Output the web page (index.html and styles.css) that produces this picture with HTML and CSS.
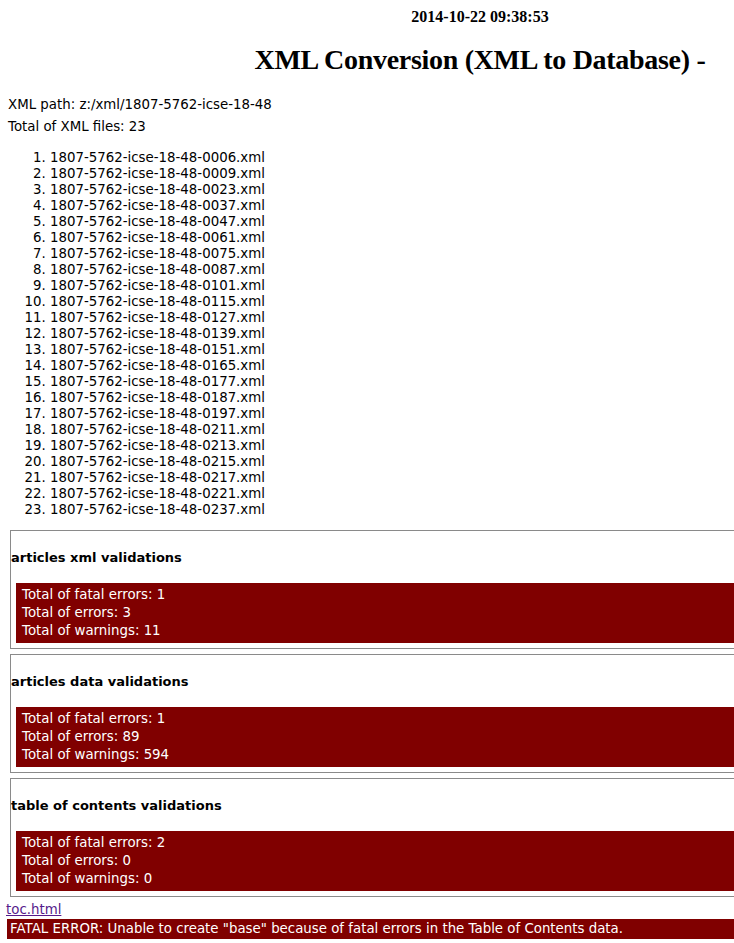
FILE: index.html
```html
<!DOCTYPE html>
<html lang="en">
<head>
<meta charset="utf-8">
<title>XML Conversion (XML to Database)</title>
<link rel="stylesheet" href="styles.css">
</head>
<body>
<div class="page">
  <div class="stamp">2014-10-22 09:38:53</div>
  <h1 class="title">XML Conversion (XML to Database) -</h1>
  <p class="info">XML path: z:/xml/1807-5762-icse-18-48</p>
  <p class="info">Total of XML files: 23</p>
  <ol class="files">
    <li>1807-5762-icse-18-48-0006.xml</li>
    <li>1807-5762-icse-18-48-0009.xml</li>
    <li>1807-5762-icse-18-48-0023.xml</li>
    <li>1807-5762-icse-18-48-0037.xml</li>
    <li>1807-5762-icse-18-48-0047.xml</li>
    <li>1807-5762-icse-18-48-0061.xml</li>
    <li>1807-5762-icse-18-48-0075.xml</li>
    <li>1807-5762-icse-18-48-0087.xml</li>
    <li>1807-5762-icse-18-48-0101.xml</li>
    <li>1807-5762-icse-18-48-0115.xml</li>
    <li>1807-5762-icse-18-48-0127.xml</li>
    <li>1807-5762-icse-18-48-0139.xml</li>
    <li>1807-5762-icse-18-48-0151.xml</li>
    <li>1807-5762-icse-18-48-0165.xml</li>
    <li>1807-5762-icse-18-48-0177.xml</li>
    <li>1807-5762-icse-18-48-0187.xml</li>
    <li>1807-5762-icse-18-48-0197.xml</li>
    <li>1807-5762-icse-18-48-0211.xml</li>
    <li>1807-5762-icse-18-48-0213.xml</li>
    <li>1807-5762-icse-18-48-0215.xml</li>
    <li>1807-5762-icse-18-48-0217.xml</li>
    <li>1807-5762-icse-18-48-0221.xml</li>
    <li>1807-5762-icse-18-48-0237.xml</li>
  </ol>

  <div class="section">
    <h3 class="section-title">articles xml validations</h3>
    <div class="summary">
      <div>Total of fatal errors: 1</div>
      <div>Total of errors: 3</div>
      <div>Total of warnings: 11</div>
    </div>
  </div>

  <div class="section">
    <h3 class="section-title">articles data validations</h3>
    <div class="summary">
      <div>Total of fatal errors: 1</div>
      <div>Total of errors: 89</div>
      <div>Total of warnings: 594</div>
    </div>
  </div>

  <div class="section">
    <h3 class="section-title">table of contents validations</h3>
    <div class="summary">
      <div>Total of fatal errors: 2</div>
      <div>Total of errors: 0</div>
      <div>Total of warnings: 0</div>
    </div>
  </div>

  <div class="toc"><a class="toc-link" href="#">toc.html</a></div>
  <div class="fatal">FATAL ERROR: Unable to create "base" because of fatal errors in the Table of Contents data.</div>
</div>
</body>
</html>
```

FILE: styles.css
```css
html {
  overflow-x: hidden;
}

body {
  margin: 0;
  background: #ffffff;
  color: #000000;
  font-family: "DejaVu Sans", Verdana, sans-serif;
  font-size: 13.35px;
}

.page {
  width: 944px;
  padding: 0 8px;
}

.stamp {
  padding-top: 8px;
  font-family: "Liberation Serif", "Times New Roman", serif;
  font-weight: bold;
  font-size: 16px;
  line-height: 18px;
  text-align: center;
}

.title {
  margin: 18px 0 21px;
  font-family: "Liberation Serif", "Times New Roman", serif;
  font-weight: bold;
  font-size: 28px;
  line-height: 32px;
  letter-spacing: -0.3px;
  text-align: center;
}

.info {
  margin: 0 0 6px;
  line-height: 16px;
}

.files {
  margin: 15px 0 12px;
  padding-left: 42px;
  line-height: 16px;
}

.section {
  margin: 0 0 5px 2px;
  border: 1px solid #8a8a8a;
}

.section-title {
  margin: 19px 0 17px;
  font-size: 13px;
  font-weight: bold;
  line-height: 16px;
}

.summary {
  margin: 0 0 5px 5px;
  padding: 3px 6px;
  background: #800000;
  color: #ffffff;
  line-height: 18px;
}

.toc {
  margin: 5px 0 1px -2px;
  line-height: 16px;
}

.toc-link {
  color: #551a8b;
}

.fatal {
  margin-left: -1px;
  padding: 2px 3px;
  background: #800000;
  color: #ffffff;
  line-height: 16px;
}
```
